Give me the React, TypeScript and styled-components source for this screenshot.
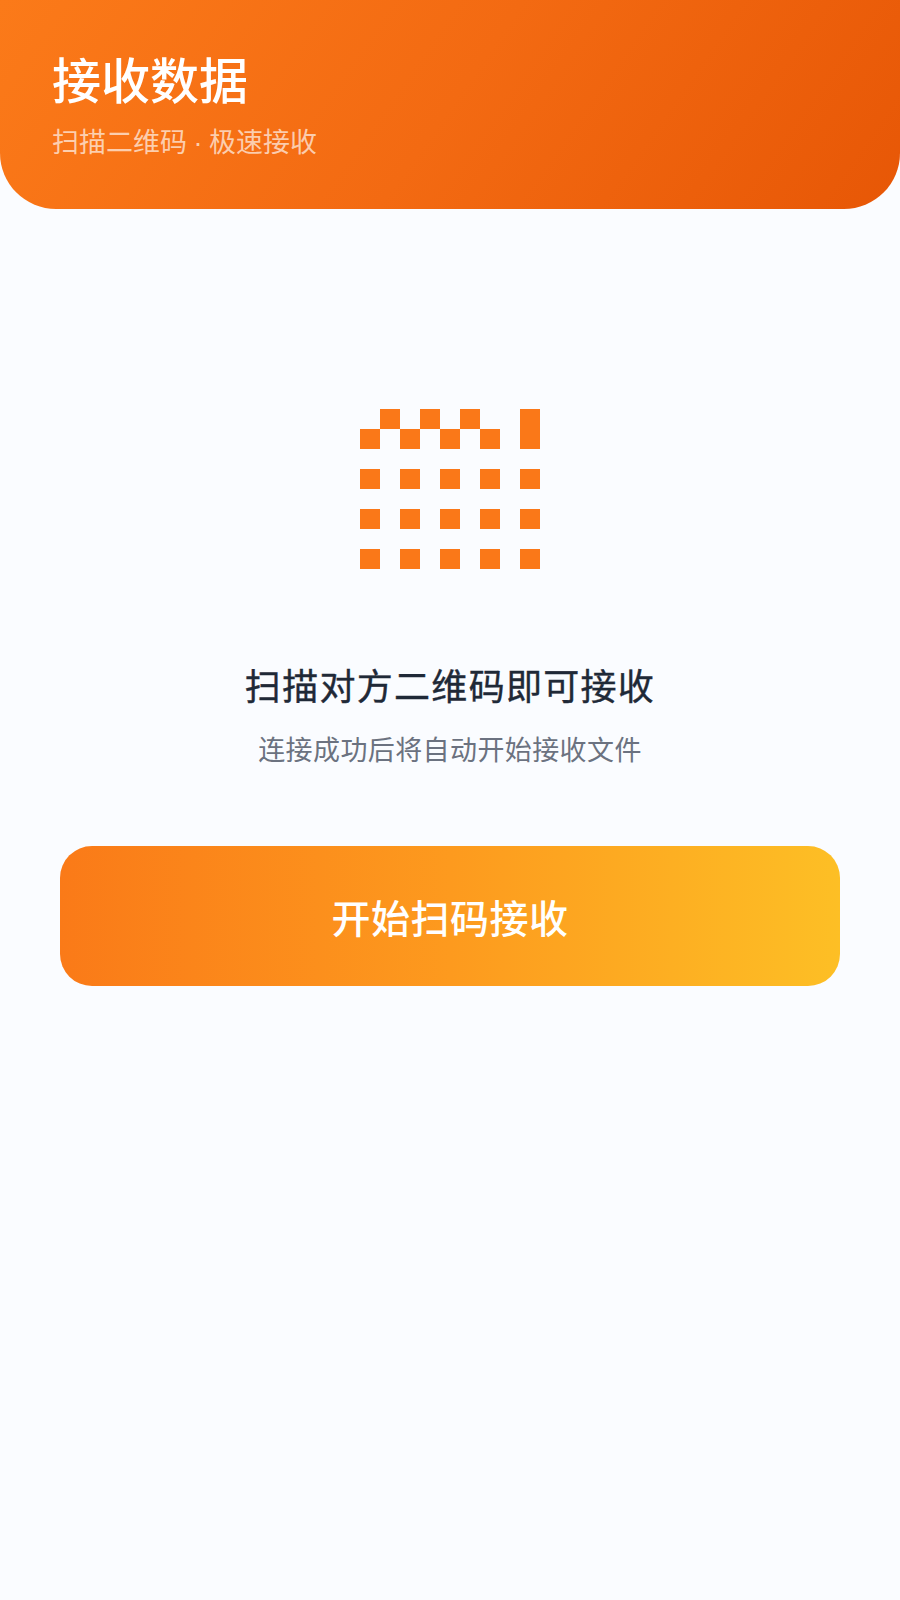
import * as React from "react";

import styled, { createGlobalStyle } from "styled-components";

const GlobalStyle = createGlobalStyle`
  html, body {
    margin: 0;
    padding: 0;
    background: #fafcff;
    font-family: "Noto Sans CJK SC", "Noto Sans", sans-serif;
  }
`;

const Page = styled.div`
  width: 900px;
  height: 1600px;
  overflow: hidden;
  display: flex;
  flex-direction: column;
  background: #fafcff;
`;

const Header = styled.header`
  box-sizing: border-box;
  height: 209px;
  padding: 44px 52px 0;
  background: linear-gradient(125deg, #fb7a19 0%, #f36a12 50%, #e75706 100%);
  border-radius: 0 0 56px 56px;
`;

const Title = styled.h1`
  margin: 0;
  font-size: 49px;
  line-height: 68px;
  font-weight: 500;
  color: #ffffff;
`;

const Subtitle = styled.p`
  margin: 12px 0 0;
  font-family: "Liberation Sans", "Noto Sans CJK SC", sans-serif;
  font-size: 27px;
  line-height: 38px;
  word-spacing: -1px;
  color: rgba(255, 255, 255, 0.66);
`;

const Content = styled.main`
  display: flex;
  flex-direction: column;
  align-items: center;
  padding: 200px 60px 0;
`;

const ScanIcon = styled.svg`
  display: block;
  width: 180px;
  height: 160px;
  fill: #fa7818;
`;

const Heading = styled.h2`
  margin: 87px 0 0;
  font-size: 36px;
  line-height: 56px;
  font-weight: 400;
  letter-spacing: 1.3px;
  -webkit-text-stroke: 0.4px #1f2937;
  color: #1f2937;
`;

const Hint = styled.p`
  margin: 17px 0 0;
  font-size: 27px;
  line-height: 40px;
  letter-spacing: 0.4px;
  color: #6b7280;
`;

const StartButton = styled.button`
  width: 100%;
  height: 140px;
  margin-top: 77px;
  padding: 0;
  border: none;
  border-radius: 32px;
  background: linear-gradient(90deg, #fa7a18 0%, #fd9a1e 50%, #fdbf25 100%);
  font-family: inherit;
  font-size: 39px;
  font-weight: 500;
  letter-spacing: 0.5px;
  color: #ffffff;
`;

// 上面两行是错开的方块，最右一列合成一根竖条
const topCells = [
  [20, 0],
  [60, 0],
  [100, 0],
  [0, 20],
  [40, 20],
  [80, 20],
  [120, 20],
];
const gridRows = [60, 100, 140];
const gridCols = [0, 40, 80, 120, 160];

const App: React.FunctionComponent = () => {
  return (
    <Page>
      <GlobalStyle />
      <Header>
        <Title>接收数据</Title>
        <Subtitle>扫描二维码 · 极速接收</Subtitle>
      </Header>
      <Content>
        <ScanIcon viewBox="0 0 180 160">
          {topCells.map(([x, y]) => (
            <rect key={`${x}-${y}`} x={x} y={y} width="20" height="20" />
          ))}
          <rect x="160" y="0" width="20" height="40" />
          {gridRows.map((y) =>
            gridCols.map((x) => (
              <rect key={`${x}-${y}`} x={x} y={y} width="20" height="20" />
            ))
          )}
        </ScanIcon>
        <Heading>扫描对方二维码即可接收</Heading>
        <Hint>连接成功后将自动开始接收文件</Hint>
        <StartButton>开始扫码接收</StartButton>
      </Content>
    </Page>
  );
};

export default App;
